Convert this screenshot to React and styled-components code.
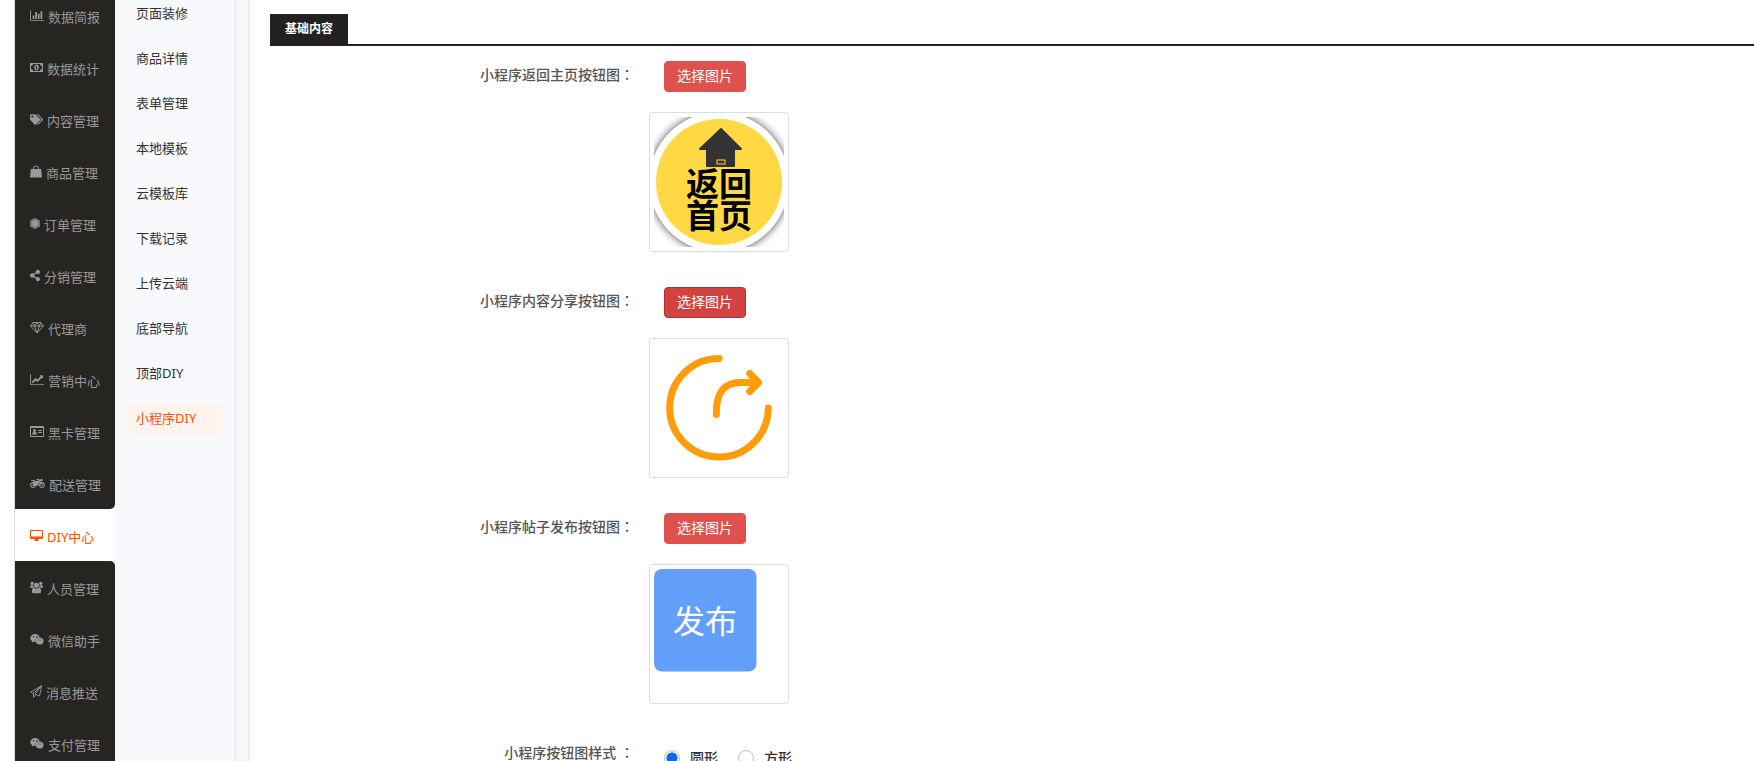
import React from "react";
import styled, { createGlobalStyle, css } from "styled-components";
import {
  FaTags,
  FaShareAlt,
  FaMotorcycle,
  FaWeixin,
} from "react-icons/fa";

const GlobalStyle = createGlobalStyle`
  * { box-sizing: border-box; }
  body {
    margin: 0;
    background: #fff;
    color: #333;
    font-family: "Noto Sans", "Noto Sans CJK SC", sans-serif;
    font-size: 14px;
  }
`;

const Shell = styled.div`
  display: flex;
  height: 100vh;
  padding-left: 14px;
  overflow: hidden;
`;

const SideNav = styled.nav`
  flex: 0 0 101px;
  margin-top: -11px;
  border-left: 1px solid #ddd;
  background: #f8f9fc;
`;

const SideLink = styled.a`
  display: flex;
  align-items: center;
  gap: 4px;
  height: 52px;
  padding: 4px 0 0 15px;
  font-size: 13px;
  line-height: 20px;
  white-space: nowrap;
  text-decoration: none;
  color: #999;
  background: #262522;
  ${(p) => p.$edge === "above" && css`border-bottom-right-radius: 5px;`}
  ${(p) => p.$edge === "below" && css`border-top-right-radius: 5px;`}
  ${(p) => p.$active && css`color: #ff5000; background: #fff;`}

  svg {
    flex: none;
    display: block;
    height: 13px;
    margin-bottom: 4px;
  }
`;

const SubNav = styled.nav`
  flex: 0 0 120px;
  display: flex;
  flex-direction: column;
  gap: 15px;
  margin-top: -1px;
  padding: 0 11px;
  background: #f8f9fc;
  border-right: 1px solid #e9eaee;
`;

const SubLink = styled.a`
  height: 30px;
  padding-left: 10px;
  border-radius: 5px;
  font-size: 13px;
  line-height: 28px;
  text-decoration: none;
  color: ${(p) => (p.$active ? "#ff5000" : "#333")};
  background: ${(p) => (p.$active ? "#fff3ee" : "transparent")};
`;

const Gutter = styled.div`
  flex: 0 0 15px;
  background: linear-gradient(90deg, #f1f2f5, #f6f7fa 4px, #f6f7fa 12px, #e6e7ea);
`;

const Main = styled.main`
  flex: 1;
  min-width: 0;
  padding: 14px 0 0 20px;
`;

const TabBar = styled.header`
  display: flex;
  height: 32px;
  border-bottom: 2px solid #222;
`;

const TabTitle = styled.h2`
  margin: 0;
  padding: 0 15px;
  font-size: 12px;
  font-weight: 700;
  line-height: 30px;
  color: #fff;
  background: #222;
`;

const Form = styled.form`
  display: flex;
  flex-direction: column;
  gap: 35px;
  padding-top: 15px;
`;

const Row = styled.div`
  display: grid;
  grid-template-columns: 364px 1fr;
  column-gap: 15px;
`;

const RowLabel = styled.label`
  font-weight: 500;
  line-height: 26px;
  text-align: right;
  color: #555;
`;

const Colon = styled.span`
  font-family: "Noto Sans CJK TC", sans-serif;
`;

const PickButton = styled.button`
  display: block;
  height: 31px;
  margin: 0 0 20px 15px;
  padding: 0 12px 2px;
  border: 1px solid ${(p) => (p.$pressed ? "#b92c28" : "#de514d")};
  border-radius: 4px;
  font-family: inherit;
  font-size: 14px;
  line-height: 26px;
  color: #fff;
  background: ${(p) => (p.$pressed ? "#d2423e" : "#de514d")};
  cursor: pointer;
`;

const Thumb = styled.div`
  width: 140px;
  height: 140px;
  padding: 4px;
  border: 1px solid #ddd;
  border-radius: 4px;
  background: #fff;

  svg { display: block; }
`;

const RadioGroup = styled.div`
  display: flex;
  gap: 20px;
  padding: 5px 0 0 15px;
`;

const RadioLabel = styled.label`
  display: flex;
  align-items: center;
  gap: 10px;
  font-weight: 500;
  line-height: 28px;
`;

const Radio = styled.input`
  appearance: none;
  width: 16px;
  height: 16px;
  margin: 0;
  border: 1px solid #b5bfd6;
  border-radius: 50%;
  background: #fff;

  &:checked {
    background: radial-gradient(circle, #0f66e8 5px, #fff 6px);
  }
`;

const Glyph = ({ w = 14, box = "0 0 14 13", children }) => (
  <svg width={w} height="13" viewBox={box} fill="currentColor" aria-hidden="true">
    {children}
  </svg>
);

const BarChart = () => (
  <Glyph box="0 128 2048 1536">
    <path d="M640 896v512h-256v-512h256zM1024 384v1024h-256v-1024h256zM2048 1536v128h-2048v-1536h128v1408h1920zM1408 640v768h-256v-768h256zM1792 256v1152h-256v-1152h256z" />
  </Glyph>
);
const LineChart = () => (
  <Glyph box="0 128 2048 1536">
    <path d="M2048 1536v128h-2048v-1536h128v1408h1920zM1920 288v435q0 21-19.5 29.5t-35.5-7.5l-121-121-633 633q-10 10-23 10t-23-10l-233-233-416 416-192-192 585-585q10-10 23-10t23 10l233 233 464-464-121-121q-16-16-7.5-35.5t29.5-19.5h435q14 0 23 9t9 23z" />
  </Glyph>
);
const Money = () => (
  <Glyph w={13} box="0 0 13 13">
    <path fillRule="evenodd" d="M0 2h13v9H0zM3 3a2 2 0 0 1-2 2v3a2 2 0 0 1 2 2h7a2 2 0 0 1 2-2V5a2 2 0 0 1-2-2zM6.5 3.6c1.500 0 2.300 1.300 2.300 2.900s-.8 2.900-2.300 2.900-2.300-1.300-2.300-2.900.8-2.900 2.300-2.900zM6.300 4.800l-1 .8.4.5.4-.3v1.700h-.7v.7h2.200v-.7h-.6V4.800z" />
  </Glyph>
);
const Tags = () => <FaTags size={13} />;
const Bag = () => (
  <Glyph w={12} box="0 0 12 13">
    <path d="M.8 4h10.400l.8 8.500H0z" />
    <path d="M3.500 6V3.300a2.500 2.300 0 0 1 5 0V6" fill="none" stroke="currentColor" />
  </Glyph>
);
const Hexagon = () => (
  <Glyph w={10} box="0 0 10 13">
    <path d="M5 .8l5 2.700v6L5 12.200 0 9.500v-6z" opacity=".7" />
    <path d="M5 2.800l3 1.700v4L5 10.200 2 8.500v-4z" />
  </Glyph>
);
const Share = () => <FaShareAlt size={10} />;
const Diamond = () => (
  <Glyph>
    <path d="M3.200 1.500h7.600l2.700 3.500L7 12 .5 5zM.5 5h13M3.200 1.500L4.500 5 7 12l2.500-7 1.300-3.500M4.500 5L7 1.500 9.500 5" fill="none" stroke="currentColor" strokeWidth=".9" strokeLinejoin="round" />
  </Glyph>
);
const IdCard = () => (
  <Glyph>
    <path fillRule="evenodd" d="M1 1h12a1 1 0 0 1 1 1v9a1 1 0 0 1-1 1H1a1 1 0 0 1-1-1V2a1 1 0 0 1 1-1zm0 2v8h12V3z" />
    <circle cx="4.500" cy="5.500" r="1.500" />
    <path d="M2 9.500c0-2 1-2.500 2.500-2.500S7 7.500 7 9.500zM8 5h4v1H8zM8 7h4v1H8z" />
  </Glyph>
);
const Motorcycle = () => <FaMotorcycle size={15} />;
const Desktop = () => (
  <Glyph w={13} box="0 0 13 13">
    <path fillRule="evenodd" d="M1 1h11a1 1 0 0 1 1 1v7a1 1 0 0 1-1 1H8.200l.5 2H4.300l.5-2H1a1 1 0 0 1-1-1V2a1 1 0 0 1 1-1zm0 1v5.500h11V2z" />
  </Glyph>
);
const Group = () => (
  <Glyph w={13} box="0 0 13 13">
    <circle cx="2.200" cy="2.400" r="1.700" />
    <circle cx="10.800" cy="2.400" r="1.700" />
    <circle cx="6.500" cy="4.200" r="2.500" />
    <path d="M0 6.500c0-1.700.6-2.300 1.500-2.300l1.900.4c.1 1 .4 1.500.9 2.100H1.200C.5 6.900 0 6.900 0 6.500zM13 6.500c0-1.700-.6-2.300-1.500-2.300l-1.900.4c-.1 1-.4 1.500-.9 2.100h3.100c.7.2 1.200.2 1.200-.2zM1.900 10.500c0-2.600.8-3.800 2.100-3.800 1 .9 4 .9 5 0 1.300 0 2.100 1.200 2.100 3.800 0 1.200-.6 1.800-1.700 1.800H3.600c-1.100 0-1.700-.6-1.700-1.800z" />
  </Glyph>
);
const Wechat = () => <FaWeixin size={14} />;
const Plane = () => (
  <Glyph w={12} box="0 0 12 13">
    <path d="M11.500.8L.6 7.100l2.900 1.300L11.500.8 5 9.200l4.600 1.800zM3.500 8.400v3.900L5.800 9.700" fill="none" stroke="currentColor" strokeWidth=".9" strokeLinejoin="round" />
  </Glyph>
);

const MENU = [
  ["数据简报", BarChart],
  ["数据统计", Money],
  ["内容管理", Tags],
  ["商品管理", Bag],
  ["订单管理", Hexagon],
  ["分销管理", Share],
  ["代理商", Diamond],
  ["营销中心", LineChart],
  ["黑卡管理", IdCard],
  ["配送管理", Motorcycle],
  ["DIY中心", Desktop],
  ["人员管理", Group],
  ["微信助手", Wechat],
  ["消息推送", Plane],
  ["支付管理", Wechat],
];
const ACTIVE_MENU = 10;

const SUBMENU = [
  "页面装修",
  "商品详情",
  "表单管理",
  "本地模板",
  "云模板库",
  "下载记录",
  "上传云端",
  "底部导航",
  "顶部DIY",
  "小程序DIY",
];

const HomeArt = () => (
  <svg width="130" height="130" viewBox="0 0 130 130" role="img" aria-label="返回首页">
    <defs>
      <radialGradient id="halo" gradientUnits="userSpaceOnUse" cx="65" cy="65" r="92">
        <stop offset=".755" stopColor="#fff" />
        <stop offset=".765" stopColor="#aaa" />
        <stop offset=".785" stopColor="#ccc" />
        <stop offset=".82" stopColor="#f0f0f0" />
        <stop offset=".86" stopColor="#fff" />
      </radialGradient>
    </defs>
    <rect width="130" height="130" fill="url(#halo)" />
    <circle cx="65" cy="65" r="63" fill="#ffd844" />
    <path d="M67 12L87 32H80V49H53V32H46z" fill="#333" stroke="#333" strokeWidth="2" strokeLinejoin="round" />
    <rect x="63" y="43" width="8" height="4" fill="#333" stroke="#ffd844" strokeWidth="1" />
    <g fontFamily="Noto Sans CJK SC, sans-serif" fontSize="33" fontWeight="700" textAnchor="middle" fill="#000">
      <text x="65" y="79">返回</text>
      <text x="65" y="111">首页</text>
    </g>
  </svg>
);

const ShareArt = () => (
  <svg width="130" height="130" viewBox="0 0 130 130" role="img" aria-label="分享">
    <g fill="none" stroke="#ff9c08" strokeWidth="7" strokeLinecap="round" strokeLinejoin="round">
      <path d="M65 15.500A49.300 49.300 0 1 0 114.300 65" />
      <path d="M62.300 71.500C62 49 70 39.500 87 39.500H104" />
      <path d="M95.700 30.500L104.500 39.500 95.700 48.500" />
    </g>
  </svg>
);

const PublishArt = () => (
  <svg width="103" height="103" viewBox="0 0 103 103" role="img" aria-label="发布">
    <rect width="102.500" height="102.500" rx="8" fill="#639ef9" />
    <text x="51" y="64" textAnchor="middle" fontFamily="Noto Sans CJK SC, sans-serif" fontSize="32" fill="#fff">
      发布
    </text>
  </svg>
);

const PICKERS = [
  { id: "home", label: "小程序返回主页按钮图", Art: HomeArt },
  { id: "share", label: "小程序内容分享按钮图", Art: ShareArt, pressed: true },
  { id: "publish", label: "小程序帖子发布按钮图", Art: PublishArt },
];

export default function App() {
  return (
    <>
      <GlobalStyle />
      <Shell>
        <SideNav>
          {MENU.map(([text, Icon], i) => (
            <SideLink
              key={text}
              href="#"
              $active={i === ACTIVE_MENU}
              $edge={i === ACTIVE_MENU - 1 ? "above" : i === ACTIVE_MENU + 1 ? "below" : undefined}
            >
              <Icon />
              <span>{text}</span>
            </SideLink>
          ))}
        </SideNav>
        <SubNav>
          {SUBMENU.map((text, i) => (
            <SubLink key={text} href="#" $active={i === SUBMENU.length - 1}>
              {text}
            </SubLink>
          ))}
        </SubNav>
        <Gutter />
        <Main>
          <TabBar>
            <TabTitle>基础内容</TabTitle>
          </TabBar>
          <Form>
            {PICKERS.map(({ id, label, Art, pressed }) => (
              <Row key={id}>
                <RowLabel htmlFor={id}>
                  {label}
                  <Colon>：</Colon>
                </RowLabel>
                <div>
                  <PickButton id={id} type="button" $pressed={pressed}>
                    选择图片
                  </PickButton>
                  <Thumb>
                    <Art />
                  </Thumb>
                </div>
              </Row>
            ))}
            <Row role="radiogroup" aria-labelledby="shape-label">
              <RowLabel as="span" id="shape-label">
                小程序按钮图样式 <Colon>：</Colon>
              </RowLabel>
              <RadioGroup>
                <RadioLabel>
                  <Radio type="radio" name="shape" defaultChecked />
                  圆形
                </RadioLabel>
                <RadioLabel>
                  <Radio type="radio" name="shape" />
                  方形
                </RadioLabel>
              </RadioGroup>
            </Row>
          </Form>
        </Main>
      </Shell>
    </>
  );
}
